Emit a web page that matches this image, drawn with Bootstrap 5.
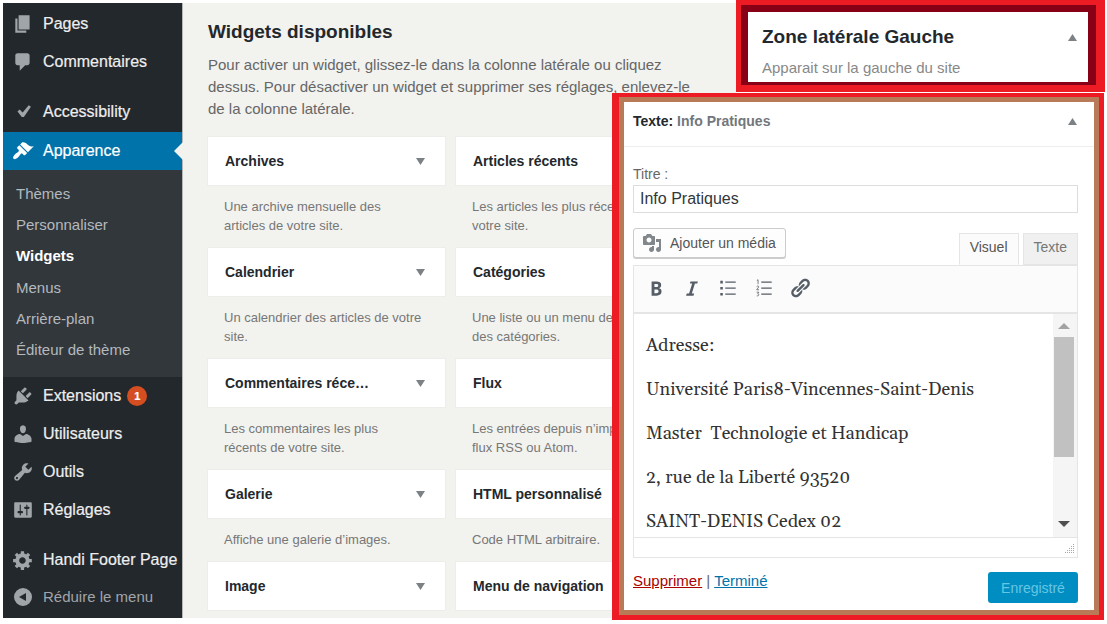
<!DOCTYPE html>
<html lang="fr">
<head>
<meta charset="utf-8">
<meta name="viewport" content="width=device-width, initial-scale=1">
<title>Widgets</title>
<link rel="stylesheet" href="https://cdn.jsdelivr.net/npm/bootstrap@5.3.0/dist/css/bootstrap.min.css">
<style>
  body { font-family: "Liberation Sans", Arial, sans-serif; font-size: 14px; line-height: 20px; color: #666; background: #fff; overflow: hidden; }
  svg { fill: currentColor; display: block; flex: none; }
  .ico { width: 20px; height: 20px; }
  .screen { background: #f2f2ee; margin: 3px 3px 0; }

  /* Admin menu */
  .side { width: 179px; flex: none; background: #23282d; box-shadow: 1px 0 0 #b4b6b6; padding-top: 2px; }
  .side a { color: #eee; text-decoration: none; }
  .side .entry { height: 38px; font-size: 16px; white-space: nowrap; -webkit-text-stroke: .2px; }
  .side .entry svg { width: 22px; height: 22px; margin: 0 9px; color: #a0a5aa; }
  .side .gap-before { margin-top: 12px; }
  .side .entry.current { background: #0073aa; color: #fff; position: relative; margin-top: 1px; }
  .side .entry.current svg { color: #fff; }
  .side .entry.current::after { content: ""; position: absolute; right: -1px; top: 10px; border: 9px solid transparent; border-left: 0; border-right-color: #f2f2ee; }
  .side .sub { background: #32373c; padding: 8px 0 11px 13px; min-height: 207px; font-size: 15px; }
  .side .sub a { color: #b4b9be; }
  .side .sub a.here { color: #fff; font-weight: 700; }
  .side .fold { height: 35px; border: 0; background: none; padding: 0; font-size: 15px; color: #a0a5aa; }
  .side .fold svg { margin: 0 10px; }
  .count { width: 20px; height: 20px; line-height: 20px; font-size: 11px; font-weight: 700; background: #d54e21; color: #fff; margin-left: 6px; }

  /* Available widgets */
  .available { padding: 17px 0 8px 26px; }
  h1, h2 { font-size: 19px; line-height: 24px; font-weight: 700; color: #23282d; margin: 0; }
  .intro { font-size: 15px; line-height: 22px; margin: 10px 0 17px; white-space: nowrap; }
  .tiles { display: grid; grid-template-columns: 237px 237px; column-gap: 11px; }
  .tile { height: 48px; padding: 0 20px 0 17px; background: #fff; box-shadow: 0 0 0 1px #ededea; font-size: 14px; font-weight: 700; color: #23282d; border: 0; text-align: left; width: 100%; }
  .tile svg, .toggle svg { width: 9px; height: 7px; color: #7c8186; }
  .about { font-size: 13px; line-height: 19px; margin: 0; padding: 12px 0 13px 16px; white-space: nowrap; color: #777; }
  .toggle { border: 0; background: none; padding: 0; }

  /* Highlighted panels, lying over the widget list */
  .over { position: absolute; top: 0; right: 2px; width: calc(100% - 614px); }
  .zone { margin-left: 124px; border: solid #ed1c24; border-width: 5px 9px 7px 5px; box-shadow: 0 1px 0 #fff; margin-bottom: 1px; }
  .zone-in { background: #fff; border: solid #880015; border-width: 7px 8px 3px 7px; padding: 13px 11px 3px 14px; }
  .zone p { font-size: 15px; line-height: 20px; margin: 9px 0 1px; color: #888; }
  .edit { margin-right: 1px; border: solid #ed1c24; border-width: 4px 5px 5px 7px; }
  .edit-in { border: 5px solid #b97a57; background: #fff; }
  .edit-head { height: 45px; border-bottom: 1px solid #eee; padding: 0 17px 6px 9px; font-weight: 700; color: #23282d; }
  .edit-head span span { color: #72777c; }
  .edit-body { padding: 17px 16px 7px 9px; }
  .edit-body input { height: 28px; width: 100%; margin-top: 1px; border: 1px solid #ddd; padding: 0 6px; font-size: 16px; color: #32373c; }
  .media { height: 30px; border: 1px solid #ccc; border-radius: 3px; background: #fdfdfd; box-shadow: 0 1px 0 #ccc; padding: 0 9px 0 8px; font-size: 14px; color: #555; }
  .media svg { color: #82878c; }
  .bar-top { margin-top: 15px; height: 37px; }
  .tab { height: 32px; border: 1px solid #e5e5e5; background: #f0f0f0; color: #777; font-size: 14px; padding: 0 10px 4px; }
  .tab.on { background: #fbfbfb; border-bottom-color: #fbfbfb; color: #555; }
  .tools { border: 1px solid #e5e5e5; border-bottom-width: 2px; background: #fbfbfb; height: 49px; padding: 0 4px 3px; }
  .tools button { width: 36px; height: 30px; border: 0; background: none; padding: 0 7px; color: #555d66; }
  .tools svg { width: 22px; height: 22px; }
  .pane { border: 1px solid #e5e5e5; border-top: 0; height: 224px; overflow: hidden; }
  .doc { padding: 18px 12px 0; font: 18px/28px Gelasio, Georgia, "Liberation Serif", serif; color: #333; }
  .doc p { margin: 0 0 16px; white-space: pre; }
  .scroll { width: 24px; background: #f5f5f5; padding: 9px 3px 10px 1px; color: #a3a3a3; }
  .scroll .thumb { width: 20px; height: 120px; background: #c1c1c1; margin-top: 8px; }
  .scroll svg { width: 12px; height: 6px; }
  .status { height: 20px; border: 1px solid #e5e5e5; border-top: 0; padding: 0 2px 2px; color: #aaa; }
  .foot { padding-top: 14px; }
  .links { font-size: 15px; line-height: 18px; color: #666; }
  .links .del { color: #a00; }
  .links .done { color: #0073aa; }
  .save { height: 31px; width: 90px; border: 0; border-radius: 3px; background: #008ec2; color: #66c6e4; font-size: 14px; }
</style>
</head>
<body>
<svg class="d-none" aria-hidden="true">
  <symbol id="down" viewBox="0 0 9 7"><path d="M0 0h9L4.500 7z"/></symbol>
  <symbol id="up" viewBox="0 0 9 7"><path d="M0 7h9L4.500 0z"/></symbol>
</svg>
<div class="screen d-flex align-items-stretch">
  <nav class="side" aria-label="Menu principal">
    <div class="d-flex flex-column">
      <a href="#" class="entry d-flex align-items-center"><svg class="ico" viewBox="0 0 20 20"><path d="M6 15V2h10v13H6zm-1 1h8v2H3V5h2v11z"/></svg>Pages</a>
      <a href="#" class="entry d-flex align-items-center"><svg class="ico" viewBox="0 0 20 20"><path d="M5 2h9c1.100 0 2 .9 2 2v7c0 1.100-.9 2-2 2h-2l-5 5v-5H5c-1.100 0-2-.9-2-2V4c0-1.100.9-2 2-2z"/></svg>Commentaires</a>
      <a href="#" class="entry gap-before d-flex align-items-center"><svg class="ico" viewBox="0 0 20 20"><path d="M15.200 3.800l2 1.400-6.400 9.300H8.900L5 9.600l1.900-1.800 2.800 2.700z"/></svg>Accessibility</a>
      <a href="#" class="entry current d-flex align-items-center"><svg class="ico" viewBox="0 0 20 20"><path d="M14.480 11.060L7.410 3.990l1.500-1.500c.5-.56 2.300-.47 3.510.32 1.210.8 1.430 1.280 2.910 2.100 1.180.64 2.450 1.260 4.450.85zm-.71.71L6.700 4.700 4.930 6.470c-.39.39-.39 1.020 0 1.410l1.060 1.060c.39.39.39 1.030 0 1.420-.6.6-1.430 1.110-2.210 1.690-.35.26-.7.53-1.010.84C1.430 14.230.4 16.080 1.400 17.070c.99 1 2.840-.03 4.180-1.360.31-.31.58-.66.85-1.020.57-.78 1.080-1.610 1.690-2.210.39-.39 1.020-.39 1.410 0l1.060 1.060c.39.39 1.020.39 1.410 0z"/></svg>Apparence</a>
      <div class="sub d-flex flex-column">
        <a href="#" class="flex-fill d-flex align-items-center">Thèmes</a>
        <a href="#" class="flex-fill d-flex align-items-center">Personnaliser</a>
        <a href="#" class="flex-fill d-flex align-items-center here">Widgets</a>
        <a href="#" class="flex-fill d-flex align-items-center">Menus</a>
        <a href="#" class="flex-fill d-flex align-items-center">Arrière-plan</a>
        <a href="#" class="flex-fill d-flex align-items-center">Éditeur de thème</a>
      </div>
      <a href="#" class="entry d-flex align-items-center"><svg class="ico" viewBox="0 0 20 20"><path d="M13.110 4.360L9.870 7.600 8 5.730l3.240-3.240c.35-.34 1.050-.2 1.560.32.52.51.66 1.210.31 1.550zm-8 1.770l.91-1.120 9.010 9.010-1.190.84c-.71.71-2.630 1.160-3.820 1.160H6.140L4.900 17.260c-.59.59-1.540.59-2.120 0-.59-.58-.59-1.530 0-2.120l1.240-1.240v-3.880c0-1.130.4-3.190 1.090-3.890zm7.260 3.970l3.240-3.240c.34-.35 1.040-.21 1.550.31.52.51.66 1.210.31 1.550l-3.240 3.250z"/></svg>Extensions<span class="count rounded-circle text-center">1</span></a>
      <a href="#" class="entry d-flex align-items-center"><svg class="ico" viewBox="0 0 20 20"><path d="M10 9.250c-2.270 0-2.730-3.440-2.730-3.440C7 4.020 7.820 2 9.970 2c2.160 0 2.980 2.020 2.710 3.810 0 0-.41 3.440-2.680 3.440zm0 2.570L12.720 10c2.390 0 5.020 2.330 5.020 4.530v2.490s-3.850 1.130-7.740 1.130c-3.850 0-7.740-1.130-7.740-1.130v-2.490c0-2.250 2.440-4.480 4.970-4.480z"/></svg>Utilisateurs</a>
      <a href="#" class="entry d-flex align-items-center"><svg class="ico" viewBox="0 0 20 20"><path d="M16.680 9.770c-1.340 1.340-3.300 1.670-4.950.99l-5.410 6.520c-.99.99-2.590.99-3.580 0s-.99-2.590 0-3.570l6.520-5.420c-.68-1.650-.35-3.610.99-4.950 1.280-1.280 3.120-1.620 4.720-1.060l-2.890 2.890 2.820 2.820 2.860-2.870c.53 1.580.18 3.390-1.080 4.650zM3.810 16.210c.4.39 1.040.39 1.430 0 .4-.4.4-1.040 0-1.430-.39-.4-1.030-.4-1.430 0-.39.39-.39 1.030 0 1.430z"/></svg>Outils</a>
      <a href="#" class="entry d-flex align-items-center"><svg class="ico" viewBox="0 0 20 20"><path fill-rule="evenodd" d="M18 16V4c0-.55-.45-1-1-1H3c-.55 0-1 .45-1 1v12c0 .55.45 1 1 1h14c.55 0 1-.45 1-1zM8 11h1c.55 0 1 .45 1 1s-.45 1-1 1H8v1.500c0 .28-.22.5-.5.5s-.5-.22-.5-.5V13H6c-.55 0-1-.45-1-1s.45-1 1-1h1V5.500c0-.28.22-.5.5-.5s.5.22.5.5V11zm5-2h-1c-.55 0-1-.45-1-1s.45-1 1-1h1V5.500c0-.28.22-.5.5-.5s.5.22.5.5V7h1c.55 0 1 .45 1 1s-.45 1-1 1h-1v5.500c0 .28-.22.5-.5.5s-.5-.22-.5-.5V9z"/></svg>Réglages</a>
      <a href="#" class="entry gap-before d-flex align-items-center"><svg class="ico" viewBox="0 0 20 20"><path d="M18 12h-2.180c-.17.7-.44 1.350-.81 1.930l1.540 1.540-2.100 2.100-1.540-1.540c-.58.36-1.230.63-1.910.79V19H8v-2.180c-.68-.16-1.330-.43-1.910-.79l-1.540 1.540-2.120-2.120 1.540-1.540c-.36-.58-.63-1.230-.79-1.910H1V9.030h2.170c.16-.7.44-1.350.8-1.940L2.430 5.550l2.100-2.100 1.540 1.540c.58-.37 1.240-.64 1.930-.81V2h3v2.180c.68.160 1.330.43 1.910.79l1.540-1.540 2.120 2.120-1.540 1.540c.36.59.64 1.240.8 1.940H18V12zm-8.500 1.500c1.660 0 3-1.340 3-3s-1.340-3-3-3-3 1.340-3 3 1.340 3 3 3z"/></svg>Handi Footer Page</a>
      <button type="button" class="fold d-flex align-items-center"><svg class="ico" viewBox="0 0 20 20"><path fill-rule="evenodd" d="M10 1a9 9 0 1 1 0 18a9 9 0 0 1 0-18zM6 10l7 4V6z"/></svg>Réduire le menu</button>
    </div>
  </nav>

  <main class="available flex-fill">
    <h1>Widgets disponibles</h1>
    <p class="intro">Pour activer un widget, glissez-le dans la colonne latérale ou cliquez<br>dessus. Pour désactiver un widget et supprimer ses réglages, enlevez-le<br>de la colonne latérale.</p>
    <div class="tiles">
      <div><button type="button" class="tile d-flex align-items-center justify-content-between">Archives<svg><use href="#down"/></svg></button><p class="about">Une archive mensuelle des<br>articles de votre site.</p></div>
      <div><button type="button" class="tile d-flex align-items-center">Articles récents</button><p class="about">Les articles les plus récents<br>votre site.</p></div>
      <div><button type="button" class="tile d-flex align-items-center justify-content-between">Calendrier<svg><use href="#down"/></svg></button><p class="about">Un calendrier des articles de votre<br>site.</p></div>
      <div><button type="button" class="tile d-flex align-items-center">Catégories</button><p class="about">Une liste ou un menu de<br>des catégories.</p></div>
      <div><button type="button" class="tile d-flex align-items-center justify-content-between">Commentaires réce…<svg><use href="#down"/></svg></button><p class="about">Les commentaires les plus<br>récents de votre site.</p></div>
      <div><button type="button" class="tile d-flex align-items-center">Flux</button><p class="about">Les entrées depuis n’importe<br>flux RSS ou Atom.</p></div>
      <div><button type="button" class="tile d-flex align-items-center justify-content-between">Galerie<svg><use href="#down"/></svg></button><p class="about">Affiche une galerie d’images.</p></div>
      <div><button type="button" class="tile d-flex align-items-center">HTML personnalisé</button><p class="about">Code HTML arbitraire.</p></div>
      <div><button type="button" class="tile d-flex align-items-center justify-content-between">Image<svg><use href="#down"/></svg></button></div>
      <div><button type="button" class="tile d-flex align-items-center">Menu de navigation</button></div>
    </div>
  </main>
</div>

<aside class="over">
  <section class="zone">
    <div class="zone-in">
      <div class="d-flex align-items-center justify-content-between"><h2>Zone latérale Gauche</h2><button type="button" class="toggle" aria-label="Replier la zone"><svg><use href="#up"/></svg></button></div>
      <p>Apparait sur la gauche du site</p>
    </div>
  </section>
  <section class="edit">
    <div class="edit-in">
      <div class="edit-head d-flex align-items-center justify-content-between"><span>Texte: <span>Info Pratiques</span></span><button type="button" class="toggle" aria-label="Replier le widget"><svg><use href="#up"/></svg></button></div>
      <form class="edit-body">
        <label for="titre" class="d-block">Titre :</label>
        <input id="titre" type="text" value="Info Pratiques" class="d-block">
        <div class="bar-top d-flex justify-content-between align-items-start">
          <button type="button" class="media d-flex align-items-center gap-2"><svg class="ico" viewBox="0 0 20 20"><path d="M13 11V4c0-.55-.45-1-1-1h-1.670L9 1H5L3.670 3H2c-.55 0-1 .45-1 1v7c0 .55.45 1 1 1h10c.55 0 1-.45 1-1zM7 4.500c1.380 0 2.500 1.120 2.500 2.500S8.380 9.500 7 9.500 4.500 8.380 4.500 7 5.620 4.500 7 4.500zM14 6h5v10.500c0 1.380-1.120 2.500-2.500 2.500S14 17.880 14 16.500s1.120-2.500 2.500-2.500c.17 0 .34.02.5.05V9h-3V6zm-4 8.050V13h2v3.500c0 1.380-1.120 2.500-2.500 2.500S7 17.880 7 16.500 8.120 14 9.500 14c.17 0 .34.02.5.05z"/></svg>Ajouter un média</button>
          <div class="d-flex gap-1 mt-auto"><button type="button" class="tab on">Visuel</button><button type="button" class="tab">Texte</button></div>
        </div>
        <div class="tools d-flex align-items-center">
          <button type="button" aria-label="Gras"><svg viewBox="0 0 20 20"><path d="M6 4v13h4.540c1.370 0 2.460-.33 3.260-1 .8-.66 1.200-1.580 1.200-2.770 0-.84-.17-1.510-.51-2.010s-.9-.85-1.670-1.030v-.09c.57-.1 1.020-.4 1.360-.9s.51-1.130.51-1.910c0-1.140-.39-1.980-1.170-2.500C12.750 4.260 11.500 4 9.780 4H6zm2.570 5.150V6.260h1.360c.73 0 1.270.11 1.610.32.34.22.51.58.51 1.070 0 .54-.16.92-.47 1.150s-.82.35-1.510.35h-1.500zm0 2.190h1.600c1.440 0 2.160.53 2.160 1.610 0 .6-.17 1.050-.51 1.340s-.86.43-1.570.43H8.570v-3.380z"/></svg></button>
          <button type="button" aria-label="Italique"><svg viewBox="0 0 20 20"><path d="M14.780 6h-2.130l-2.800 9h2.120l-.62 2H4.600l.62-2h2.140l2.800-9H8.030l.62-2h6.750z"/></svg></button>
          <button type="button" aria-label="Liste à puces"><svg viewBox="0 0 20 20"><path d="M3 3.500h2.300v2.300H3zM3 9h2.300v2.300H3zM3 14.500h2.300v2.300H3zM7.500 4h9.500v1.200H7.500zM7.500 9.500h9.500v1.200H7.500zM7.500 15h9.500v1.200H7.500z"/></svg></button>
          <button type="button" aria-label="Liste numérotée"><svg viewBox="0 0 20 20"><path d="M7.500 4h9.500v1.200H7.500zM7.500 9.500h9.500v1.200H7.500zM7.500 15h9.500v1.200H7.500z"/><path fill="none" stroke="currentColor" stroke-width=".7" d="M3.500 3.200L4.600 2.500V6.500M3.300 8.800c.6-1 2-.7 1.900.3L3.300 11.600h2.200M3.300 13.800h2L4.300 15.300c1.600.2 1.300 2-.9 1.900"/></svg></button>
          <button type="button" aria-label="Lien"><svg viewBox="0 0 20 20"><path d="M17.740 2.760c1.680 1.690 1.680 4.410 0 6.100l-1.530 1.520c-1.120 1.120-2.700 1.470-4.140 1.090l2.620-2.610.76-.77.76-.76c.84-.84.84-2.200 0-3.040-.84-.85-2.200-.85-3.040 0l-.77.76-3.380 3.380c-.37-1.440-.02-3.020 1.100-4.140l1.520-1.530c1.690-1.680 4.420-1.680 6.100 0zM8.590 13.430l5.340-5.340c.42-.42.42-1.100 0-1.520-.44-.43-1.130-.39-1.530 0l-5.330 5.340c-.42.42-.42 1.100 0 1.520.44.43 1.130.39 1.520 0zm-.76 2.290l4.140-4.150c.38 1.440.03 3.020-1.090 4.140l-1.520 1.530c-1.690 1.680-4.410 1.680-6.100 0-1.680-1.680-1.680-4.420 0-6.100l1.530-1.520c1.120-1.120 2.700-1.470 4.140-1.100l-4.140 4.150c-.85.84-.85 2.200 0 3.050.84.84 2.200.84 3.040 0z"/></svg></button>
        </div>
        <div class="pane d-flex">
          <div class="doc flex-fill" role="textbox" aria-label="Contenu" contenteditable="true" spellcheck="false"><p>Adresse:</p><p>Université Paris8-Vincennes-Saint-Denis</p><p>Master  Technologie et Handicap</p><p>2, rue de la Liberté 93520</p><p>SAINT-DENIS Cedex 02</p></div>
          <div class="scroll d-flex flex-column align-items-center">
            <svg viewBox="0 0 12 6"><path d="M0 6h12L6 0z"/></svg>
            <div class="thumb"></div>
            <svg class="mt-auto" viewBox="0 0 12 6"><path fill="#505050" d="M0 0h12L6 6z"/></svg>
          </div>
        </div>
        <div class="status d-flex justify-content-end align-items-end"><svg width="12" height="12" viewBox="0 0 12 12"><path d="M10 1h1v1h-1zM10 3h1v1h-1zM8 3h1v1H8zM10 5h1v1h-1zM8 5h1v1H8zM6 5h1v1H6zM10 7h1v1h-1zM8 7h1v1H8zM6 7h1v1H6zM4 7h1v1H4zM10 9h1v1h-1zM8 9h1v1H8zM6 9h1v1H6zM4 9h1v1H4zM2 9h1v1H2z"/></svg></div>
        <div class="foot d-flex justify-content-between align-items-start"><div class="links"><a href="#" class="del">Supprimer</a> | <a href="#" class="done">Terminé</a></div><button type="button" class="save">Enregistré</button></div>
      </form>
    </div>
  </section>
</aside>
<script src="https://cdn.jsdelivr.net/npm/bootstrap@5.3.0/dist/js/bootstrap.bundle.min.js"></script>
</body>
</html>
